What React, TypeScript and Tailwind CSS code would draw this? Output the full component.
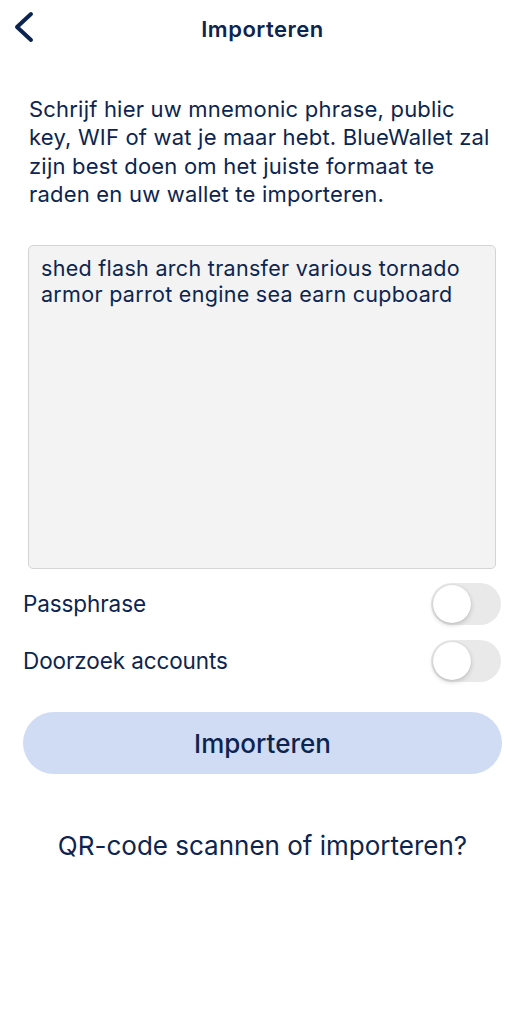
import React from "react";

function Toggle() {
  return (
    <div className="relative h-[42px] w-[70px] shrink-0 rounded-full bg-[#e9e9ea]">
      <div className="absolute left-[2px] top-[2px] h-[38px] w-[38px] rounded-full bg-white shadow-[0_2px_5px_rgba(0,0,0,0.18),0_0_1px_rgba(0,0,0,0.15)]" />
    </div>
  );
}

export default function App() {
  return (
    <div
      className="min-h-[1024px] w-[525px] bg-white text-[#0c2550]"
      style={{ fontFamily: "Inter, 'Noto Sans', sans-serif" }}
    >
      {/* header */}
      <div className="relative flex h-[56px] items-center justify-center">
        <svg
          className="absolute left-[12px] top-[11px]"
          width="24"
          height="32"
          viewBox="0 0 24 32"
          fill="none"
        >
          <path
            d="M19 3 L5 16 L19 29"
            stroke="#0c2550"
            strokeWidth="4"
            strokeLinecap="round"
            strokeLinejoin="round"
          />
        </svg>
        <h1 className="mt-[2px] text-[22px] font-semibold tracking-[0.5px]">
          Importeren
        </h1>
      </div>

      <div className="px-[23px]">
        <p className="mt-[39px] pl-[6px] pr-[12px] text-[22px] leading-[28.3px] tracking-[0.2px]">
          Schrijf hier uw mnemonic phrase, public key, WIF of wat je maar hebt.
          BlueWallet zal zijn best doen om het juiste formaat te raden en uw
          wallet te importeren.
        </p>

        <div className="mt-[37px] ml-[5px] mr-[6px] h-[324px] rounded-[5px] border border-[#d4d4d4] bg-[#f3f3f3] px-[12px] pt-[9px] text-[21.5px] leading-[26px] tracking-[0.3px]">
          shed flash arch transfer various tornado armor parrot engine sea earn
          cupboard
        </div>

        <div className="mt-[14px] flex items-center justify-between pr-[1px]">
          <span className="text-[22.5px] tracking-[-0.1px]">Passphrase</span>
          <Toggle />
        </div>
        <div className="mt-[15px] flex items-center justify-between pr-[1px]">
          <span className="text-[22.5px] tracking-[-0.1px]">Doorzoek accounts</span>
          <Toggle />
        </div>

        <button className="mt-[30px] flex h-[62px] w-full items-center justify-center rounded-full bg-[#d0dcf4] text-[26px] font-medium text-[#0c2550]">
          Importeren
        </button>

        <div className="mt-[52px] text-center text-[26px]">
          QR-code scannen of importeren?
        </div>
      </div>
    </div>
  );
}
